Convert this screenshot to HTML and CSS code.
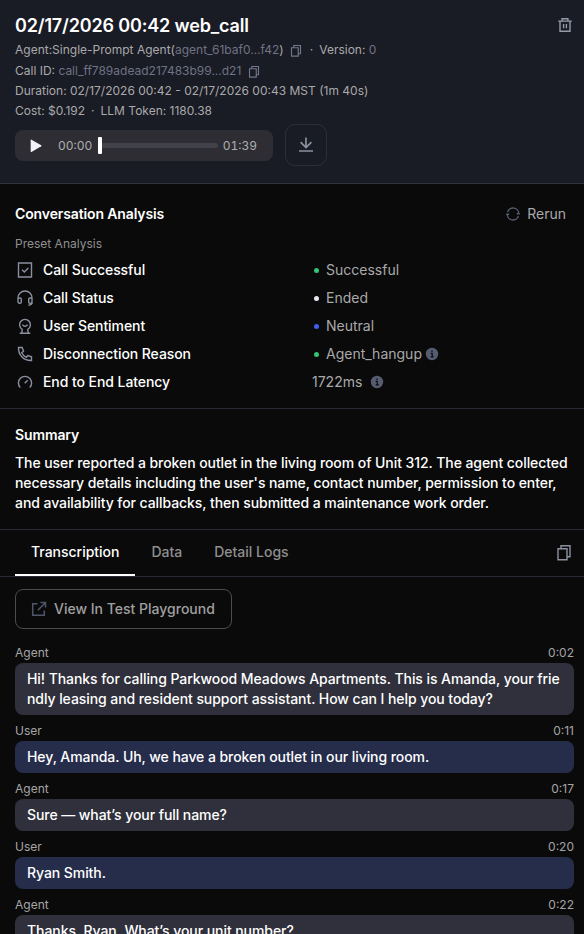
FILE: index.html
```html
<!DOCTYPE html>
<html lang="en">
<head>
    <meta charset="UTF-8">
    <meta name="viewport" content="width=device-width, initial-scale=1.0">
    <title>Call Details</title>
    <link rel="stylesheet" href="styles.css">
</head>
<body>
    <svg class="sprite" aria-hidden="true">
        <symbol id="icon-copy" viewBox="0 0 16 18">
            <path d="M5 4.2V1.7h9v11h-2.7M2 4.7h9v11.1H2z"/>
        </symbol>
        <symbol id="icon-info" viewBox="0 0 14 14">
            <circle cx="7" cy="7" r="6.2" fill="#565c70" stroke="none"/>
            <path d="M5.7 6.3h1.5v3.6M5.7 9.9h3M7 3.6v1.3" stroke="#0a0a0b" stroke-width="1.2"/>
        </symbol>
    </svg>

    <header class="call-header">
        <div class="title-row">
            <h1>02/17/2026 00:42 web_call</h1>
            <svg class="icon trash" viewBox="0 0 16 16"><path d="M1.2 4.1h13.6M3 4.1v10.2h10V4.1M5.1 4V1.7h5.8V4M6.6 7v4.3M9.4 7v4.3"/></svg>
        </div>
        <div class="meta">Agent:Single-Prompt Agent(<span class="dim">agent_61baf0...f42</span>)<svg class="icon copy-small"><use href="#icon-copy"/></svg><span class="sep">·</span>Version: <span class="dim">0</span></div>
        <div class="meta call-id">Call ID: <span class="dim">call_ff789adead217483b99...d21</span><svg class="icon copy-small"><use href="#icon-copy"/></svg></div>
        <div class="meta">Duration: 02/17/2026 00:42 - 02/17/2026 00:43 MST (1m 40s)</div>
        <div class="meta">Cost: $0.192<span class="sep cost-sep">·</span>LLM Token: 1180.38</div>
        <div class="audio-row">
            <div class="player">
                <svg class="play" viewBox="0 0 12 14"><path d="M.7 1.2Q.7.3 1.5.7l9.7 5.6q.8.5 0 1L1.5 13q-.8.4-.8-.5z"/></svg>
                <span class="time">00:00</span>
                <div class="track"><div class="thumb"></div></div>
                <span class="time">01:39</span>
            </div>
            <button class="download">
                <svg class="icon" viewBox="0 0 16 16"><path d="M8 .5v10M2.6 5.2 8 10.6l5.4-5.4M1 14h14" stroke-width="1.7"/></svg>
            </button>
        </div>
    </header>

    <section class="analysis">
        <div class="heading-row">
            <h2>Conversation Analysis</h2>
            <div class="rerun">
                <svg class="icon" viewBox="0 0 14 14"><path d="M1.5 5A5.8 5.8 0 0 1 12.8 7M12.5 9A5.8 5.8 0 0 1 1.2 7M.2 7.2h3M10.800 6.800h3"/></svg>
                <span>Rerun</span>
            </div>
        </div>
        <p class="sub">Preset Analysis</p>
        <div class="row">
            <svg class="icon" viewBox="0 0 16 16"><path d="M1.5 1h13v14h-13zM5 7.8l2.3 2.3 4-4.2"/></svg>
            <span class="name">Call Successful</span>
            <span class="value"><i class="dot green"></i>Successful</span>
        </div>
        <div class="row">
            <svg class="icon" viewBox="0 0 16 16"><path d="M1 8h2q1.3 0 1.3 1.3V12q0 1.3-1.3 1.3h-.3Q1 13.3 1 11.6V8A7 7 0 0 1 15 8h-2q-1.3 0-1.3 1.3V12q0 1.3 1.3 1.3h2V8M15 12.800q-.2 2.300-3.600 2.500"/></svg>
            <span class="name">Call Status</span>
            <span class="value"><i class="dot white"></i>Ended</span>
        </div>
        <div class="row">
            <svg class="icon" viewBox="0 0 16 16"><path d="M4.8 15.2l.4-3.800a5.400 5.400 0 1 1 5.600 0l.4 3.800M2.700 15.200h10.600M5.400 6.800Q8 9.700 10.600 6.800"/></svg>
            <span class="name">User Sentiment</span>
            <span class="value"><i class="dot blue"></i>Neutral</span>
        </div>
        <div class="row">
            <svg class="icon" viewBox="0 0 16 16"><path d="M1.5 1.5h3.7l1.3 3.700-1.800 1.500q1.400 3 4.600 4.600l1.500-1.800 3.700 1.300v3.700Q8.700 14.700 5 11T1.500 1.500z"/></svg>
            <span class="name">Disconnection Reason</span>
            <span class="value"><i class="dot green"></i>Agent_hangup<svg class="info"><use href="#icon-info"/></svg></span>
        </div>
        <div class="row">
            <svg class="icon" viewBox="0 0 16 16"><path d="M3.300 13.600A6.600 6.600 0 1 1 12.700 13.600M7.700 9.300l3-3"/></svg>
            <span class="name">End to End Latency</span>
            <span class="value">1722ms<svg class="info spaced"><use href="#icon-info"/></svg></span>
        </div>
    </section>

    <section class="summary">
        <h2>Summary</h2>
        <p>The user reported a broken outlet in the living room of Unit 312. The agent collected necessary details including the user's name, contact number, permission to enter, and availability for callbacks, then submitted a maintenance work order.</p>
    </section>

    <nav class="tabs">
        <a class="tab active">Transcription</a>
        <a class="tab">Data</a>
        <a class="tab">Detail Logs</a>
        <svg class="icon copy-large"><use href="#icon-copy"/></svg>
    </nav>

    <main class="transcript">
        <button class="playground">
            <svg class="icon" viewBox="0 0 16 16"><path d="M6.5 2.7H1.7v11.6h11.6V9.500M9.500 1.500h5v5M14.300 1.700 6.800 9.200" stroke-width="1.5"/></svg>
            View In Test Playground
        </button>
        <div class="message agent">
            <div class="label"><span>Agent</span><span>0:02</span></div>
            <p>Hi! Thanks for calling Parkwood Meadows Apartments. This is Amanda, your friendly leasing and resident support assistant. How can I help you today?</p>
        </div>
        <div class="message user">
            <div class="label"><span>User</span><span>0:11</span></div>
            <p>Hey, Amanda. Uh, we have a broken outlet in our living room.</p>
        </div>
        <div class="message agent">
            <div class="label"><span>Agent</span><span>0:17</span></div>
            <p>Sure — what’s your full name?</p>
        </div>
        <div class="message user">
            <div class="label"><span>User</span><span>0:20</span></div>
            <p>Ryan Smith.</p>
        </div>
        <div class="message agent">
            <div class="label"><span>Agent</span><span>0:22</span></div>
            <p>Thanks, Ryan. What’s your unit number?</p>
        </div>
    </main>
</body>
</html>
```

FILE: styles.css
```css
* {
    box-sizing: border-box;
}
body {
    margin: 0;
    height: 934px;
    overflow: hidden;
    background: #0a0a0b;
    color: #ffffff;
    font-family: Inter, sans-serif;
    font-size: 14px;
    line-height: 20px;
    letter-spacing: -0.005em;
}
h1, h2, p {
    margin: 0;
}
h1 {
    font-size: 18px;
    line-height: 24px;
    font-weight: 600;
    letter-spacing: -0.009em;
}
h2 {
    font-size: 14px;
    line-height: 20px;
    font-weight: 600;
    letter-spacing: -0.009em;
}
button {
    font: inherit;
    letter-spacing: inherit;
    background: none;
    padding: 0;
}
.sprite {
    display: none;
}
.icon {
    width: 16px;
    height: 16px;
    flex-shrink: 0;
    fill: none;
    stroke: #8b90a0;
    stroke-width: 1.4;
}

/* Header */
.call-header {
    height: 184px;
    padding: 14px 11px 0 15px;
    background: #191b25;
    border-bottom: 1px solid #30323d;
}
.title-row {
    display: flex;
    justify-content: space-between;
    align-items: center;
    margin-bottom: 2px;
}
.trash {
    margin-bottom: 2px;
    stroke: #9599a8;
}
.meta {
    display: flex;
    align-items: center;
    height: 20px;
    font-size: 12px;
    color: #aaaaaa;
    white-space: pre;
    letter-spacing: 0;
}
.call-id {
    height: 21px;
}
.dim {
    color: #6f7383;
}
.copy-small {
    width: 12px;
    height: 14px;
    margin: 2px 0 0 6.5px;
    stroke: #72778a;
    stroke-width: 1.5;
}
.sep {
    margin: 0 6px 0 7.5px;
}
.cost-sep {
    margin: 0 6px;
}
.audio-row {
    display: flex;
    align-items: center;
    gap: 12px;
    margin-top: 3px;
}
.player {
    display: flex;
    align-items: center;
    width: 258px;
    height: 31px;
    margin-top: 1px;
    padding: 0 16px 0 15px;
    background: #2d2d33;
    border-radius: 8px;
}
.play {
    width: 12px;
    height: 14px;
    margin-right: 16px;
    fill: #f2f3f7;
}
.time {
    font-size: 12px;
    font-variant-numeric: tabular-nums;
    letter-spacing: 0;
    color: #adadb1;
}
.track {
    display: flex;
    align-items: center;
    flex: 1;
    height: 5px;
    margin: 0 5px 0 6px;
    background: #41414a;
    border-radius: 3px;
}
.thumb {
    width: 4px;
    height: 17px;
    background: #ffffff;
    border-radius: 1px;
}
.download {
    display: flex;
    align-items: center;
    justify-content: center;
    width: 42px;
    height: 42px;
    border: 1px solid #2c2e39;
    border-radius: 10px;
}

/* Analysis */
.analysis {
    height: 225px;
    padding: 20px 18px 0 15px;
    border-bottom: 1px solid #282a36;
}
.heading-row {
    display: flex;
    justify-content: space-between;
}
.rerun {
    display: flex;
    align-items: center;
    gap: 7px;
    color: #a9a9a9;
    letter-spacing: 0;
}
.rerun .icon {
    width: 14px;
    height: 14px;
    stroke: #565c70;
}
.sub {
    margin: 10px 0 2px;
    font-size: 12px;
    color: #8f8f8f;
    letter-spacing: 0;
}
.row {
    display: flex;
    align-items: center;
    height: 28px;
    padding-left: 2px;
}
.name {
    width: 269px;
    margin-left: 10px;
    font-weight: 500;
}
.value {
    display: flex;
    align-items: center;
    color: #a9a9a9;
    letter-spacing: 0;
}
.dot {
    width: 5px;
    height: 5px;
    margin: 0 7.5px 0 1.5px;
    border-radius: 50%;
}
.green {
    background: #35c374;
}
.white {
    background: #e8e9ee;
}
.blue {
    background: #3f5ff0;
}
.info {
    width: 14px;
    height: 14px;
    margin-left: 3px;
    fill: none;
}
.spaced {
    margin-left: 7.5px;
}

/* Summary */
.summary {
    height: 121px;
    padding: 16px 15px 0;
    border-bottom: 1px solid #282a36;
}
.summary p {
    margin-top: 8px;
    font-weight: 500;
}

/* Tabs */
.tabs {
    display: flex;
    height: 47px;
    padding: 0 12px 0 15px;
    border-bottom: 1px solid #282a36;
    letter-spacing: -0.001em;
}
.tab {
    padding: 12px 16px;
    font-weight: 500;
    color: #8f8f8f;
}
.tab.active {
    color: #ffffff;
    border-bottom: 2px solid #ffffff;
}
.copy-large {
    height: 18px;
    margin: 14px 0 0 auto;
}

/* Transcript */
.transcript {
    padding: 12px 10px 0 15px;
}
.playground {
    display: flex;
    align-items: center;
    gap: 7px;
    width: 217px;
    height: 40px;
    margin-bottom: 14px;
    padding-left: 15px;
    border: 1px solid #4c4c4f;
    border-radius: 8px;
    color: #a0a0a0;
    font-weight: 500;
    letter-spacing: 0;
}
.playground .icon {
    stroke: #50566a;
}
.message {
    margin-bottom: 6px;
}
.label {
    display: flex;
    justify-content: space-between;
    font-size: 12px;
    color: #a5a5a5;
    letter-spacing: 0;
}
.message p {
    padding: 6px 12px;
    border-radius: 8px;
    font-weight: 500;
    word-break: break-all;
}
.agent p {
    background: #2f303b;
}
.user p {
    background: #262d4b;
}
```
